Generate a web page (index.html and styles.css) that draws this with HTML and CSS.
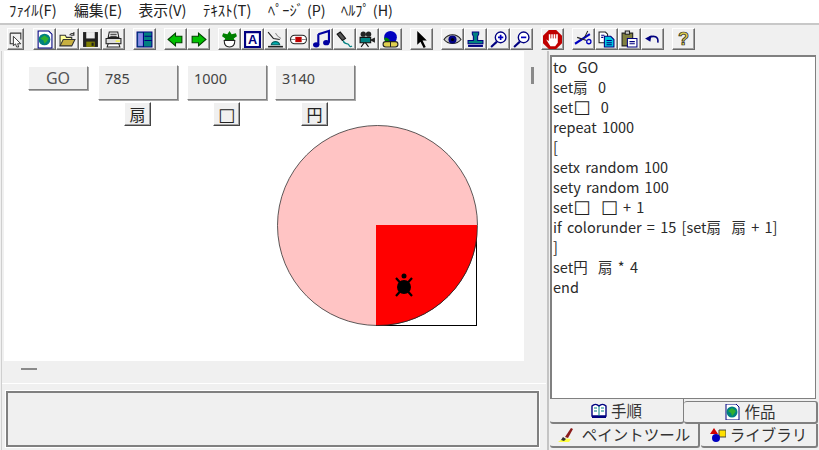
FILE: index.html
```html
<!DOCTYPE html>
<html lang="ja">
<head>
  <meta charset="UTF-8" />
  <title>ロゴ</title>
  <link rel="stylesheet" href="styles.css">
</head>
<body>
  <nav class="menu">
    <span class="m1">ﾌｧｲﾙ(F)</span><span class="m2">編集(E)</span><span class="m2">表示(V)</span><span class="m1">ﾃｷｽﾄ(T)</span><span class="m3">ﾍﾟｰｼﾞ (P)</span><span class="m4">ﾍﾙﾌﾟ (H)</span>
  </nav>

  <div class="toolbar">
    <div class="group narrow">
      <button class="tool"><svg viewBox="0 0 16 16"><path d="M3 2h10v6M3 2v10h5" fill="none" stroke="#333"/><path d="M6 5l7 7-3 0 1 3-2 0-1-3-2 2z" fill="#fff" stroke="#333" stroke-width=".9"/></svg></button>
    </div>
    <div class="group">
      <button class="tool"><svg viewBox="0 0 16 16"><path d="M2 0h10l3 3v13H2z" fill="#fff" stroke="#000080"/><circle cx="8" cy="8" r="5.500" fill="#008080"/><path d="M4 7l4-3 4 3-2 3-2 2-1-3z" fill="#2fae2f"/></svg></button>
      <button class="tool"><svg viewBox="0 0 16 16"><path d="M1 14V4h5l1 2h5v2" fill="#ffff99" stroke="#333"/><path d="M1 14l3-6h11l-3 6z" fill="#c8b040" stroke="#333"/><path d="M10 4c1-2 3-2 4-1M14 1v3h-3" fill="none" stroke="#333"/></svg></button>
      <button class="tool"><svg viewBox="0 0 16 16"><path d="M1 1h14v14H1z" fill="#222"/><path d="M4 1h8v6H4z" fill="#eee"/><path d="M4 10h8v5H4z" fill="#808000"/><path d="M9 11h2v3H9z" fill="#222"/></svg></button>
      <button class="tool"><svg viewBox="0 0 16 16"><path d="M4 1h8l1 5H3z" fill="#fff" stroke="#222"/><path d="M1 7h14v5H1z" fill="#ddd" stroke="#222"/><path d="M3 12h10l1 3H2z" fill="#fff" stroke="#222"/><path d="M10 9h4v1h-4z" fill="#ff0"/><path d="M5 3h6M5 5h6" stroke="#222"/></svg></button>
    </div>
    <div class="group">
      <button class="tool"><svg viewBox="0 0 16 16"><path d="M1 1h14v14H1z" fill="#008080" stroke="#000080"/><path d="M2 2h5v12H2z" fill="#8a8ae8"/><path d="M8 5h7M8 9h7M7 1v14" stroke="#000080"/></svg></button>
    </div>
    <div class="group">
      <button class="tool"><svg viewBox="0 0 16 16"><path d="M1 8l7-6v3h6v6H8v3z" fill="#00c000" stroke="#004000"/></svg></button>
      <button class="tool"><svg viewBox="0 0 16 16"><path d="M15 8L8 2v3H2v6h6v3z" fill="#00c000" stroke="#004000"/></svg></button>
    </div>
    <div class="group">
      <button class="tool"><svg viewBox="0 0 16 16"><path d="M8 0l2 3 4-1 1 3-3 2 1 2H3l1-2-3-2 1-3 4 1z" fill="#008000"/><path d="M3 9h10c0 4-2 6-5 6s-5-2-5-6z" fill="#fff" stroke="#222"/></svg></button>
      <button class="tool"><svg viewBox="0 0 16 16"><path d="M1 1h14v14H1z" fill="#fff" stroke="#000080" stroke-width="2"/><text x="8" y="12.500" class="ico-a">A</text></svg></button>
      <button class="tool"><svg viewBox="0 0 16 16"><path d="M1 1l5 6 6 1" fill="none" stroke="#222"/><path d="M8 2c1 2 3 4 5 5" fill="none" stroke="#888"/><path d="M4 13c1-4 7-4 8 0z" fill="#00b0b0" stroke="#006060"/><path d="M1 14h14v1.500H1z" fill="#222"/></svg></button>
      <button class="tool"><svg viewBox="0 0 16 16"><rect x="0.500" y="4" width="15" height="8" rx="4" fill="#fff" stroke="#222"/><path d="M5 5.500h6v5H5z" fill="#c00000"/><path d="M1 8h4M11 8h4" stroke="#888"/></svg></button>
      <button class="tool"><svg viewBox="0 0 16 16"><path d="M5 3l10-3v11" fill="none" stroke="#0000a0" stroke-width="2"/><path d="M5 3v10" stroke="#0000a0" stroke-width="2"/><ellipse cx="3" cy="13" rx="3" ry="2.500" fill="#0000a0"/><ellipse cx="12.500" cy="11" rx="3" ry="2.500" fill="#0000a0"/></svg></button>
      <button class="tool"><svg viewBox="0 0 16 16"><path d="M1 3l3-2 5 6-3 2z" fill="#555" stroke="#111"/><path d="M7 9c0 4 4 2 5 4s2 2 3 1" fill="none" stroke="#008080" stroke-width="1.200"/></svg></button>
      <button class="tool"><svg viewBox="0 0 16 16"><circle cx="4" cy="3" r="2.500" fill="#222"/><circle cx="9" cy="3" r="2.500" fill="#222"/><path d="M1 6h10v5H1z" fill="#008080" stroke="#111"/><path d="M11 8l4-2v5l-4-2z" fill="#222"/><path d="M5 11l-3 4M6 11l3 4" stroke="#111"/></svg></button>
      <button class="tool"><svg viewBox="0 0 16 16"><circle cx="8" cy="6" r="6" fill="#0000c0"/><path d="M2 7c2-2 3 0 5 1v2H3z" fill="#008000"/><rect x="1" y="10" width="14" height="5" rx="2.500" fill="#e0d050" stroke="#222"/><path d="M8 10v5" stroke="#222"/></svg></button>
    </div>
    <div class="group">
      <button class="tool"><svg viewBox="0 0 16 16"><path d="M4 0v13l3-3 3 6 2-1-3-6h4z" fill="#000"/></svg></button>
    </div>
    <div class="group">
      <button class="tool"><svg viewBox="0 0 16 16"><path d="M0 8c4-6 12-6 16 0-4 5-12 5-16 0z" fill="#ccc" stroke="#222"/><circle cx="8" cy="8" r="3.800" fill="#000080"/><circle cx="8" cy="8" r="1.500" fill="#000"/></svg></button>
      <button class="tool"><svg viewBox="0 0 16 16"><path d="M5 1h6v2l-1 2v4h5v3H1V9h5V5L5 3z" fill="#008080" stroke="#000080"/><path d="M1 13h14v2H1z" fill="#000080"/></svg></button>
      <button class="tool"><svg viewBox="0 0 16 16"><circle cx="10" cy="6" r="5" fill="#fff" stroke="#000080" stroke-width="1.300"/><path d="M7.500 6h5M10 3.500v5" stroke="#0000c0" stroke-width="1.600"/><path d="M6.500 10L1 15" stroke="#000080" stroke-width="2"/></svg></button>
      <button class="tool"><svg viewBox="0 0 16 16"><circle cx="10" cy="6" r="5" fill="#fff" stroke="#000080" stroke-width="1.300"/><path d="M7.500 6h5" stroke="#0000c0" stroke-width="1.600"/><path d="M6.500 10L1 15" stroke="#000080" stroke-width="2"/></svg></button>
    </div>
    <div class="group stopgroup">
      <button class="tool"><svg viewBox="0 0 18 18"><path d="M5.500 0h7L18 5.500v7L12.500 18h-7L0 12.500v-7z" fill="#c00000"/><path d="M3 9l2.500 1.500V4h8.500v8l-2.500 3.500H7z" fill="#fff"/><path d="M7.400 3v5M9.700 3v5M12 3v5" stroke="#c00000" stroke-width=".8"/></svg></button>
    </div>
    <div class="group">
      <button class="tool"><svg viewBox="0 0 16 16"><path d="M0 12l14-9" stroke="#0000c0" stroke-width="2"/><path d="M2 6l9 3" stroke="#222"/><circle cx="13" cy="10" r="2" fill="none" stroke="#0000c0" stroke-width="1.200"/><path d="M12 0l-3 6" stroke="#222"/></svg></button>
      <button class="tool"><svg viewBox="0 0 16 16"><path d="M1 1h6l2 2v8H1z" fill="#fff" stroke="#222"/><path d="M6 5h6l3 3v7H6z" fill="#00c8e0" stroke="#000080"/><path d="M8 9h5M8 11h5M8 13h5M3 4h3M3 6h2" stroke="#000080"/></svg></button>
      <button class="tool"><svg viewBox="0 0 16 16"><path d="M1 2h10v12H1z" fill="#808040" stroke="#222"/><path d="M4 0h4v3H4z" fill="#ccc" stroke="#222"/><path d="M6 7h9v8H6z" fill="#fff" stroke="#000080"/><path d="M8 10h5M8 12h5" stroke="#000080"/></svg></button>
      <button class="tool"><svg viewBox="0 0 16 16"><path d="M5 6c4-2 9-1 8 5" fill="none" stroke="#000080" stroke-width="1.500"/><path d="M1 7l6-3-1 6z" fill="#000080"/></svg></button>
    </div>
    <div class="group">
      <button class="tool"><svg viewBox="0 0 16 16"><text x="8" y="13.500" class="ico-q">?</text></svg></button>
    </div>
  </div>

  <div class="main">
    <section class="left">
      <div class="stage-row">
        <div class="stage">
          <svg class="drawing" viewBox="0 0 520 310">
            <defs>
              <clipPath id="corner"><rect x="372" y="174" width="101" height="101"/></clipPath>
            </defs>
            <rect x="372.500" y="174.500" width="100" height="100" fill="#fff" stroke="#000"/>
            <circle cx="373.500" cy="174.500" r="100" fill="#ffc4c4" stroke="#333" stroke-width=".8"/>
            <circle cx="373.500" cy="174.500" r="100" fill="#f00" stroke="#222" stroke-width=".8" clip-path="url(#corner)"/>
            <!-- タートル -->
            <circle cx="400" cy="225" r="2.500"/>
            <circle cx="400" cy="236" r="7"/>
            <path d="M392 227l16 18M408 227l-16 18" stroke="#000" stroke-width="2.200"/>
          </svg>
          <button class="widget go">GO</button>
          <div class="widget box b1">785</div>
          <div class="widget box b2">1000</div>
          <div class="widget box b3">3140</div>
          <div class="widget tag t1">扇</div>
          <div class="widget tag t2"><span class="blank">□</span></div>
          <div class="widget tag t3">円</div>
        </div>
        <div class="vscroll"><i class="thumb-v"></i></div>
      </div>
      <div class="hscroll"><i class="thumb-h"></i></div>
      <div class="message"></div>
    </section>

    <aside class="right">
      <div class="code">
        <div>to  GO</div>
        <div>set扇  0</div>
        <div>set<span class="blank">□</span>  0</div>
        <div>repeat 1000</div>
        <div>[</div>
        <div>setx random 100</div>
        <div>sety random 100</div>
        <div>set<span class="blank">□</span>  <span class="blank">□</span> + 1</div>
        <div>if colorunder = 15 [set扇  扇 + 1]</div>
        <div>]</div>
        <div>set円  扇 * 4</div>
        <div>end</div>
      </div>
      <div class="tabs">
        <div class="tab active"><svg viewBox="0 0 16 16"><path d="M1 3c2-2 5-2 7 0 2-2 5-2 7 0v10H1z" fill="#fff" stroke="#000080" stroke-width="1.400"/><path d="M8 3v10M3 5h3M3 8h3M10 5h3M10 8h3" stroke="#008080"/><path d="M1 14h14" stroke="#000080" stroke-width="2"/></svg>手順</div>
        <div class="tab upper"><svg viewBox="0 0 16 16"><path d="M2 0h10l3 3v13H2z" fill="#fff" stroke="#000080"/><circle cx="8" cy="8" r="5.500" fill="#008080"/><path d="M4 7l4-3 4 3-2 3-2 2-1-3z" fill="#2fae2f"/></svg>作品</div>
        <div class="tab paint"><svg viewBox="0 0 20 16"><path d="M0 15c4-4 8-4 13-3l-2 3z" fill="#ffff40"/><path d="M13 1l2 1-5 9-3-1z" fill="#8b1c1c"/><path d="M5 10l3 2-2 2-3-1z" fill="#333"/></svg>ペイントツール</div>
        <div class="tab lib"><svg viewBox="0 0 16 16"><path d="M9 3h7v7H9z" fill="#ffe000" stroke="#444"/><path d="M4 1l4 6H0z" fill="#d00000"/><circle cx="6" cy="11" r="4" fill="#0000c0"/></svg>ライブラリ</div>
      </div>
    </aside>
  </div>
</body>
</html>
```

FILE: styles.css
```css
:root {
  --bg: #f0f0f0;
  --shadow: #808080;
  --text: #222;
}
* { box-sizing: border-box; }
body {
  margin: 0;
  width: 819px;
  height: 450px;
  overflow: hidden;
  background: var(--bg);
  color: var(--text);
  font-family: "Noto Sans CJK JP", "Noto Sans", sans-serif;
}

/* メニュー */
.menu {
  display: flex;
  align-items: center;
  height: 25px;
  padding: 0 0 2px 9px;
  background: #fff;
  border-bottom: 2px solid #c8c8c8;
  font-size: 14.800px;
  line-height: 1;
  white-space: pre;
}
.menu span { display: block; }
.m1 { width: 65px; }
.m2 { width: 64.500px; }
.m3 { width: 73px; font-size: 14.300px; }
.m4 { font-size: 14.300px; }

/* ツールバー */
.toolbar {
  display: flex;
  gap: 8px;
  height: 26px;
  padding: 3px 0 0 7px;
  background: var(--bg);
}
.group { display: flex; }
.narrow { margin-right: 1px; }
.tool {
  display: flex;
  align-items: center;
  justify-content: center;
  width: 23px;
  height: 22px;
  padding: 0;
  background: var(--bg);
  border: 1px solid;
  border-color: #fff #696969 #696969 #fff;
  box-shadow: inset -1px -1px 0 #a0a0a0;
}
.narrow .tool { width: 17px; }
.tool svg { width: 17px; height: 17px; overflow: visible; }
.stopgroup .tool svg { width: 19px; height: 19px; }
.ico-a { font: bold 12px "Liberation Sans", sans-serif; text-anchor: middle; fill: #000080; }
.ico-q { font: bold 17px "Liberation Sans", sans-serif; text-anchor: middle; fill: #e0d050; stroke: #222; stroke-width: .7px; }

/* 本体 */
.main {
  display: grid;
  grid-template-columns: 549px 270px;
  height: 399px;
}
.left {
  display: flex;
  flex-direction: column;
  margin-left: 1px;
  border-left: 1px solid #cfcfcf;
  border-right: 2px solid #c4c4c4;
  padding-right: 1px;
}
.stage-row { display: flex; height: 310px; padding-left: 2px; }
.stage {
  position: relative;
  width: 520px;
  height: 310px;
  background: #fff;
}
.drawing { position: absolute; left: 0; top: 0; width: 520px; height: 310px; }

.widget {
  position: absolute;
  background: var(--bg);
  border: 1px solid;
  border-color: #fff #808080 #808080 #fff;
  box-shadow: 1px 1px 0 #a8a8a8;
  font-family: "Noto Sans", "Noto Sans CJK JP", sans-serif;
  font-size: 14.400px;
  color: #444;
}
.go { left: 24px; top: 15px; width: 60px; height: 24px; padding: 0 0 2px; font-size: 16px; color: #555; }
.box { top: 14px; width: 80px; height: 35px; padding: 3px 0 0 6px; }
.b1 { left: 94px; }
.b2 { left: 183px; }
.b3 { left: 271px; }
.tag {
  top: 51px;
  width: 27px;
  height: 24px;
  text-align: center;
  font-size: 16px;
  line-height: 23px;
  font-family: "Noto Sans CJK JP", sans-serif;
  border-color: #fff #444 #444 #fff;
  box-shadow: inset -1px -1px 0 #a0a0a0;
  color: #222;
}
.t1 { left: 120px; }
.t2 { left: 209px; }
.t3 { left: 297px; }

/* 空欄の変数名 */
.blank {
  font-family: "DejaVu Sans", sans-serif;
  font-size: 18px;
  line-height: 1;
  color: #222;
}

.vscroll { flex: 1; padding: 16px 0 0 7px; }
.thumb-v { display: block; width: 3px; height: 17px; background: #8a8a8a; }
.hscroll { height: 23px; padding: 7px 0 0 19px; border-bottom: 1px solid #fff; }
.thumb-h { display: block; width: 16px; height: 2px; background: #8a8a8a; }
.message {
  height: 56px;
  margin: 7px 7px 0 4px;
  border: 2px solid #808080;
  outline: 1px solid #fff;
  background: var(--bg);
}

/* 右側 */
.right { display: flex; flex-direction: column; padding: 4px 3px 0 1px; }
.code {
  height: 344px;
  padding: 0 0 0 1px;
  background: #fff;
  border: 1px solid #808080;
  border-width: 2px 1px 1px 2px;
  font-size: 14.500px;
  line-height: 20px;
  word-spacing: 2px;
  color: #2a2a2a;
}
.code div { height: 20px; white-space: pre; }
.tabs {
  display: grid;
  grid-template-columns: 134px 134px;
  grid-template-rows: 25px 24px;
  font-size: 15.500px;
  line-height: 1;
  color: #333;
}
.tab {
  display: flex;
  align-items: center;
  justify-content: center;
  gap: 4px;
  background: var(--bg);
  border-right: 2px solid var(--shadow);
  border-bottom: 2px solid var(--shadow);
  border-radius: 0 0 3px 3px;
}
.tab svg { width: 16px; height: 16px; }
.tab.active { border-right: 1px solid var(--shadow); }
.tab.upper { margin-top: 2px; border-top: 1px solid var(--shadow); border-radius: 3px; }
.tab.paint { grid-column: 1 / 3; grid-row: 2; width: 150px; }
.tab.paint svg { width: 20px; }
.tab.lib { grid-column: 1 / 3; grid-row: 2; width: 117px; margin-left: 151px; }
```
